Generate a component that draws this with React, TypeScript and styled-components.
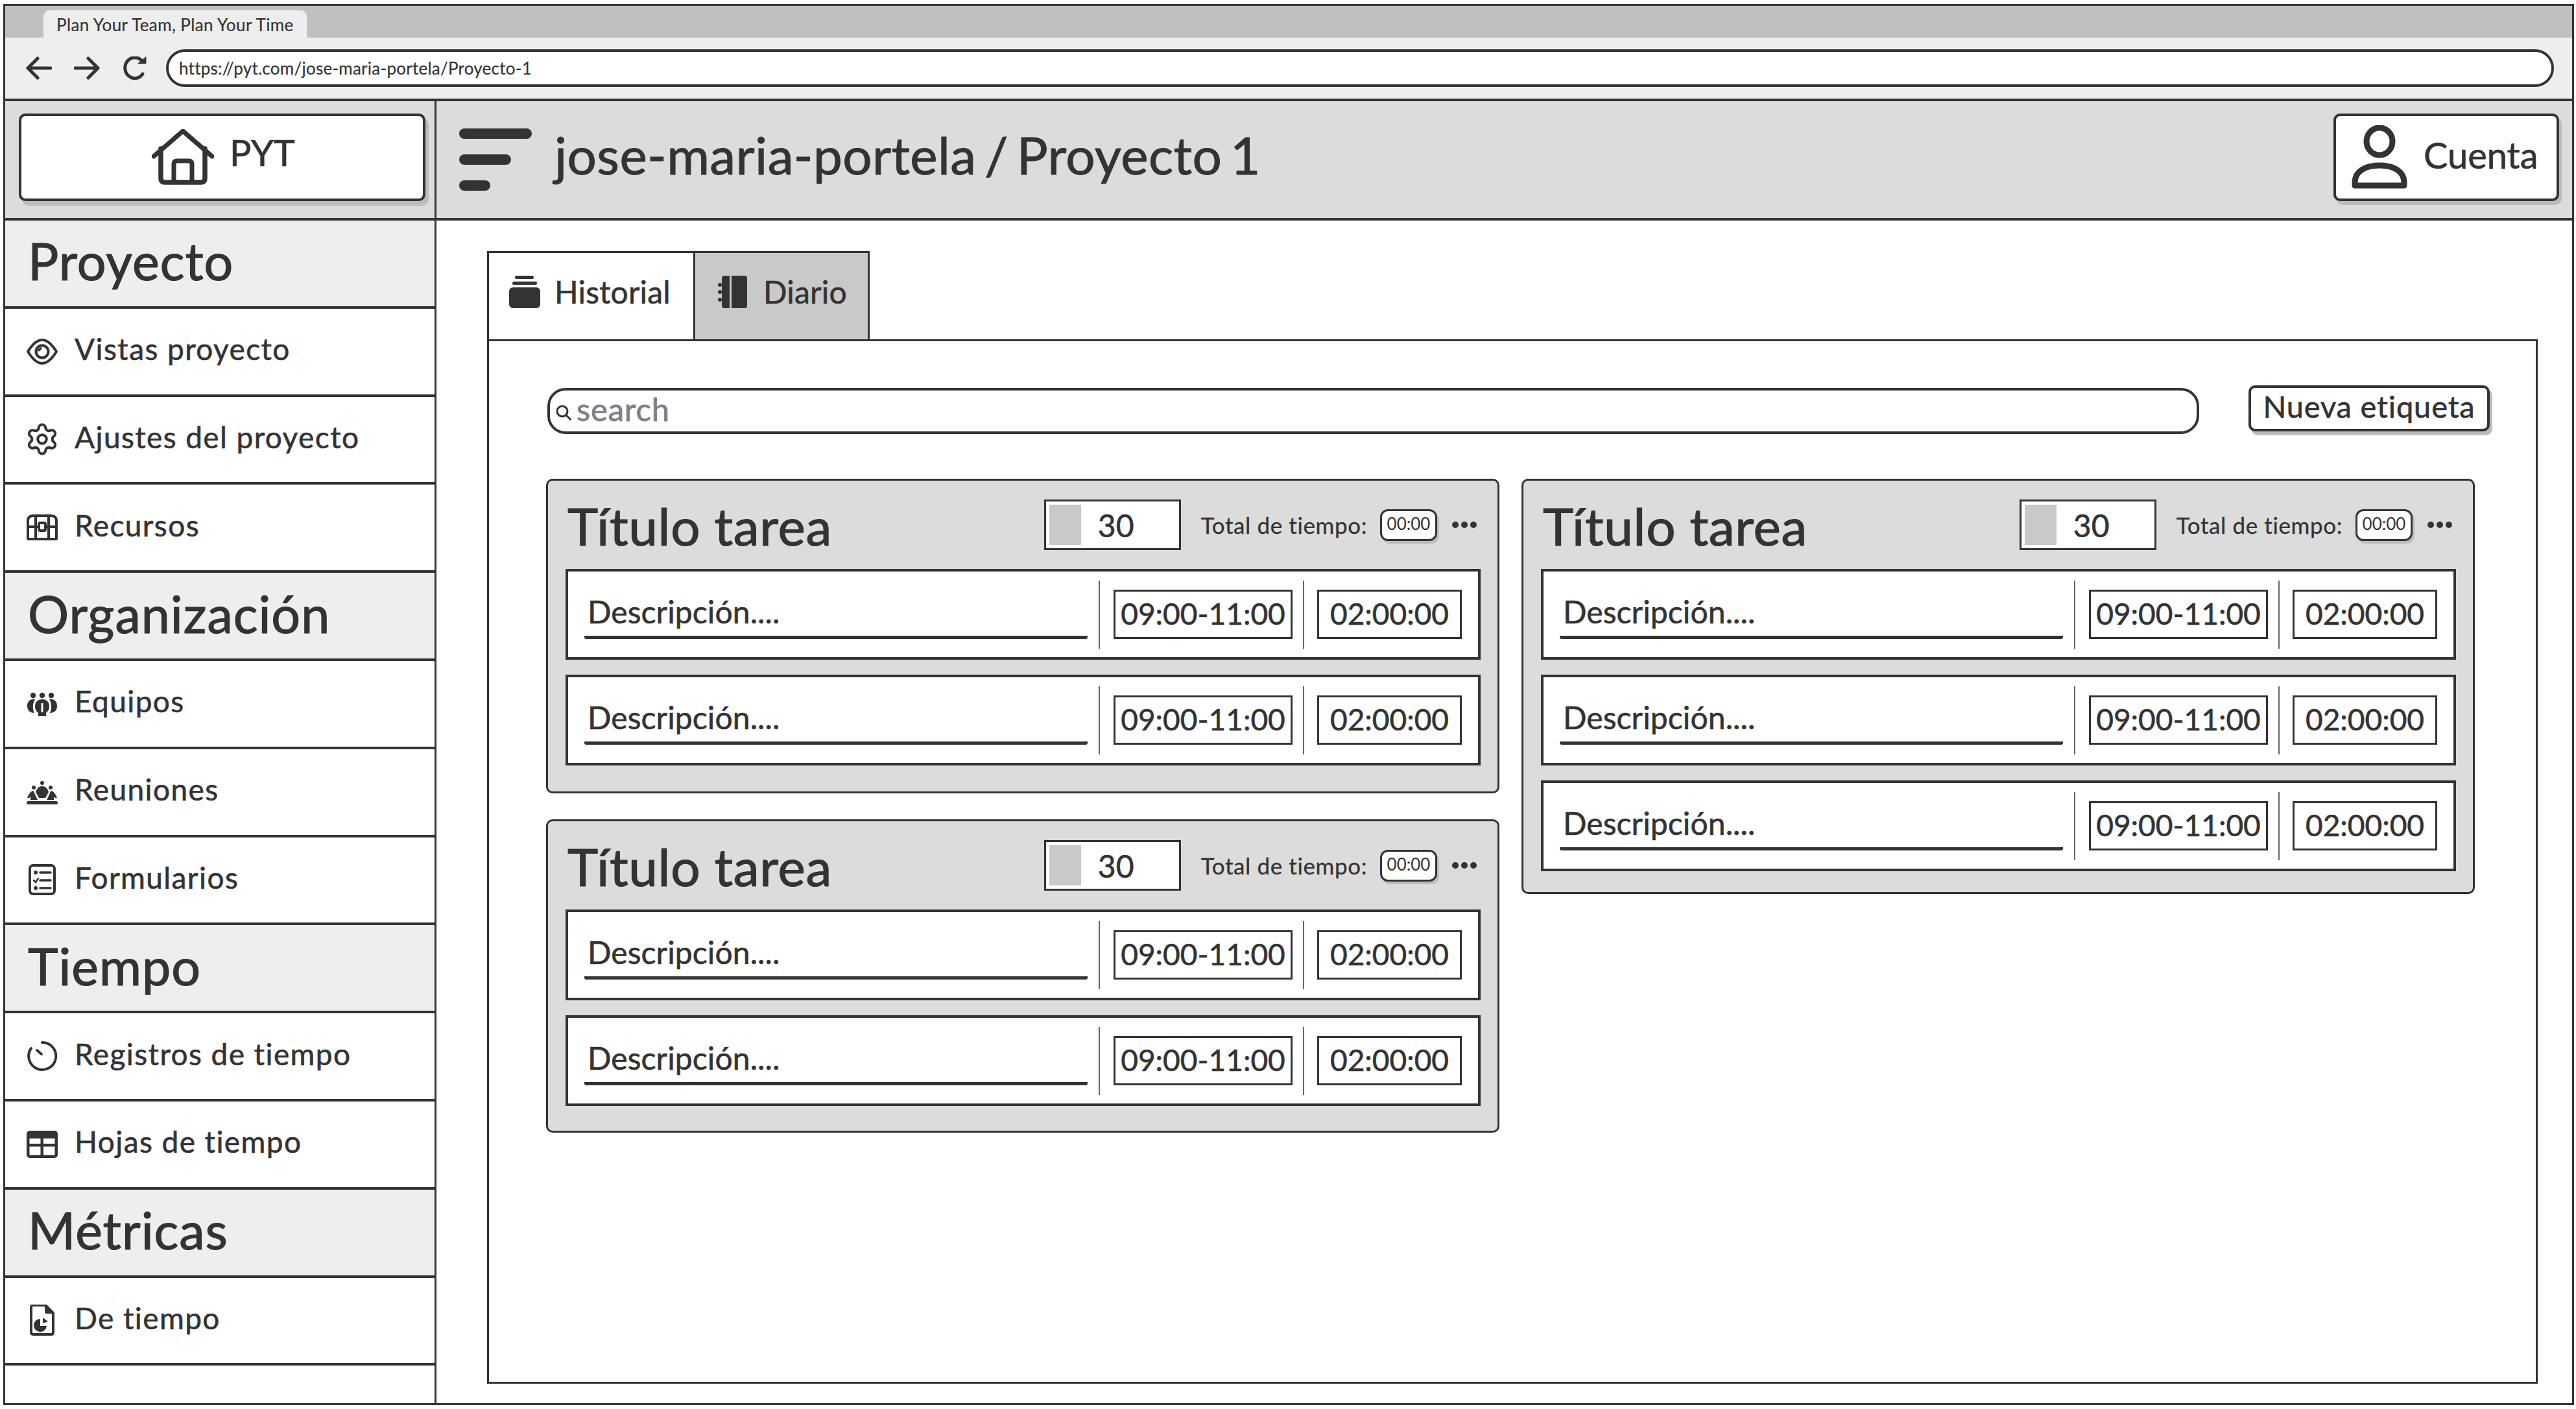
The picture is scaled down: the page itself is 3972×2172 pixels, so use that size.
import React from "react";
import styled, { createGlobalStyle } from "styled-components";
import { Settings } from "lucide-react";

const Global = createGlobalStyle`
  html, body { margin: 0; padding: 0; background: #fff; }
  body { font-family: "Lato", "Open Sans", sans-serif; color: #333; overflow: hidden; -webkit-text-stroke: 0.6px #333; }
  #root { width: 3972px; height: 2172px; }
  * { box-sizing: border-box; }
`;

const INK = "#333";

const Page = styled.div`
  width: 3972px;
  height: 2172px;
  padding: 6px 3px 6px 5px;
  background: #fff;
`;
const Frame = styled.div`
  width: 100%;
  height: 100%;
  border: 3px solid ${INK};
  display: flex;
  flex-direction: column;
`;
const TabStrip = styled.div`
  height: 49px;
  background: #c0c0c0;
  padding-left: 59px;
  display: flex;
  align-items: flex-end;
`;
const BrowserTab = styled.div`
  width: 406px;
  height: 42px;
  background: #eee;
  border-radius: 9px 9px 0 0;
  padding-left: 20px;
  font-size: 26px;
  line-height: 44px;
  letter-spacing: 0.4px;
  -webkit-text-stroke: 0.2px #333;
`;
const BrowserBar = styled.div`
  height: 94px;
  background: #eee;
  display: flex;
  align-items: center;
  padding: 0 28px 0 32px;
`;
const NavIcon = styled.svg`
  width: 40px;
  height: 36px;
  margin-right: 34px;
  flex: none;
`;
const Address = styled.div`
  flex: 1;
  height: 58px;
  margin-left: -6px;
  background: #fff;
  border: 4px solid ${INK};
  border-radius: 29px;
  padding-left: 16px;
  font-size: 26px;
  line-height: 50px;
  letter-spacing: 0.25px;
  -webkit-text-stroke: 0.2px #333;
`;
const Shell = styled.div`
  flex: 1;
  display: grid;
  grid-template-columns: 665px 1fr;
  grid-template-rows: 188px 1fr;
  min-height: 0;
`;
const LogoCell = styled.div`
  background: #dcdcdc;
  border-top: 4px solid ${INK};
  border-bottom: 4px solid ${INK};
  border-right: 3px solid ${INK};
  padding: 0 0 8px 21px;
  display: flex;
  align-items: center;
`;
const LogoButton = styled.div`
  width: 627px;
  height: 135px;
  background: #fff;
  border: 4px solid ${INK};
  border-radius: 10px;
  box-shadow: 5px 7px 0 #bcbcbc;
  display: flex;
  align-items: center;
  justify-content: center;
  gap: 24px;
  padding-left: 4px;
  font-size: 56px;
`;
const LogoText = styled.span`
  margin-top: -16px;
`;
const TopBar = styled.div`
  background: #dcdcdc;
  border-top: 4px solid ${INK};
  border-bottom: 4px solid ${INK};
  display: flex;
  align-items: center;
  padding: 0 20px 0 35px;
`;
const MenuGlyph = styled.svg`
  width: 112px;
  height: 96px;
  flex: none;
`;
const PageTitle = styled.h1`
  margin: -17px 0 0 35px;
  font-size: 80px;
  font-weight: 400;
  letter-spacing: 0.4px;
  word-spacing: -8px;
  -webkit-text-stroke: 1px #333;
  flex: 1;
`;
const AccountButton = styled.div`
  width: 348px;
  height: 135px;
  margin-top: -8px;
  background: #fff;
  border: 4px solid ${INK};
  border-radius: 10px;
  box-shadow: 4px 6px 0 #bcbcbc;
  display: flex;
  align-items: center;
  padding-left: 24px;
  gap: 25px;
  font-size: 56px;
  line-height: 56px;
`;
const AccountText = styled.span`
  margin-top: -6px;
`;
const Sidebar = styled.nav`
  border-right: 3px solid ${INK};
  display: flex;
  flex-direction: column;
`;
const SectionRow = styled.div`
  height: 135.8px;
  flex: none;
  background: #eee;
  border-bottom: 4px solid ${INK};
  padding: 0 0 8px 35px;
  display: flex;
  align-items: center;
  font-size: 79px;
  letter-spacing: 1px;
  -webkit-text-stroke: 1.2px #333;
`;
const ItemRow = styled.div`
  height: 135.8px;
  flex: none;
  border-bottom: 4px solid ${INK};
  padding-left: 33px;
  display: flex;
  align-items: center;
  gap: 26px;
  font-size: 46px;
  letter-spacing: 1.4px;
`;
const ItemLabel = styled.span`
  margin-top: -8px;
`;
const Glyph = styled.svg`
  width: 48px;
  height: 48px;
  flex: none;
  display: block;
`;
const GearWrap = styled.span`
  display: flex;
  align-items: center;
  justify-content: center;
  width: 48px;
  height: 48px;
  flex: none;
`;
const Main = styled.main`
  padding: 47px 0 0 78px;
  display: flex;
  flex-direction: column;
  min-height: 0;
`;
const TabRow = styled.div`
  height: 136px;
  display: flex;
  flex: none;
`;
const TabItem = styled.div<{ $active?: boolean }>`
  width: ${(p) => (p.$active ? 321 : 269)}px;
  background: ${(p) => (p.$active ? "#fff" : "#c9c9c9")};
  border: 3px solid ${INK};
  border-left: ${(p) => (p.$active ? `3px solid ${INK}` : "none")};
  border-bottom: none;
  display: flex;
  align-items: center;
  gap: 22px;
  padding: 0 0 14px ${(p) => (p.$active ? 31 : 35)}px;
  font-size: 48px;
  letter-spacing: 0.2px;
`;
const TabGlyph = styled.svg`
  width: 48px;
  height: 50px;
  flex: none;
`;
const Panel = styled.section`
  width: 3162px;
  height: 1610px;
  border: 3px solid ${INK};
  padding: 72px 0 0 88px;
  flex: none;
`;
const SearchRow = styled.div`
  display: flex;
  align-items: flex-start;
  margin-bottom: 69px;
  height: 71px;
`;
const SearchBox = styled.div`
  width: 2547px;
  height: 71px;
  margin-left: 2px;
  border: 4px solid ${INK};
  border-radius: 28px;
  display: flex;
  align-items: center;
  gap: 8px;
  padding: 0 0 8px 9px;
  font-size: 49px;
  color: #7f7f8b;
  letter-spacing: 0.8px;
  -webkit-text-stroke: 0.8px #7f7f8b;
`;
const SearchGlyph = styled.svg`
  width: 24px;
  height: 24px;
  flex: none;
  margin-top: 12px;
`;
const ActionButton = styled.div`
  width: 372px;
  height: 71px;
  margin: -4px 0 0 76px;
  background: #fff;
  border: 4px solid ${INK};
  border-radius: 10px;
  box-shadow: 4px 6px 0 #bcbcbc;
  display: flex;
  align-items: center;
  justify-content: center;
  padding-bottom: 7px;
  font-size: 47px;
  letter-spacing: 0.85px;
`;
const Board = styled.div`
  display: grid;
  grid-template-columns: 1470px 1470px;
  column-gap: 34px;
  align-items: start;
`;
const Column = styled.div`
  display: flex;
  flex-direction: column;
  gap: 40px;
`;
const Card = styled.article<{ $bottom: number }>`
  background: #dcdcdc;
  border: 3px solid ${INK};
  border-radius: 10px;
  padding: 0 26px ${(p) => p.$bottom}px 27px;
`;
const CardHead = styled.header`
  height: 136px;
  display: flex;
  align-items: center;
  padding-right: 5px;
`;
const CardTitle = styled.h2`
  margin: 2px 0 0 3px;
  font-size: 80px;
  font-weight: 400;
  letter-spacing: 0.7px;
  -webkit-text-stroke: 1.2px #333;
  flex: 1;
`;
const Stepper = styled.div`
  width: 211px;
  height: 78px;
  background: #fff;
  border: 3px solid ${INK};
  padding: 5px;
  display: flex;
  align-items: center;
  gap: 26px;
  font-size: 48px;
`;
const StepperSwatch = styled.span`
  width: 49px;
  height: 100%;
  background: #c9c9c9;
  flex: none;
`;
const TotalLabel = styled.span`
  margin-left: 31px;
  font-size: 35px;
  letter-spacing: 0.6px;
  -webkit-text-stroke: 0.3px #333;
`;
const TotalPill = styled.span`
  width: 88px;
  height: 49px;
  margin-left: 20px;
  background: #fff;
  border: 3px solid ${INK};
  border-radius: 12px;
  box-shadow: 3px 4px 0 #bcbcbc;
  display: flex;
  align-items: center;
  justify-content: center;
  font-size: 26px;
  padding-bottom: 5px;
  -webkit-text-stroke: 0;
`;
const Dots = styled.svg`
  width: 40px;
  height: 12px;
  margin-left: 22px;
  flex: none;
`;
const Rows = styled.div`
  display: flex;
  flex-direction: column;
  gap: 23px;
`;
const Row = styled.div`
  height: 140px;
  background: #fff;
  border: 4px solid ${INK};
  display: flex;
  align-items: center;
  padding: 0 25px;
`;
const Description = styled.div`
  width: 776px;
  height: 75px;
  flex: none;
  border-bottom: 5px solid ${INK};
  border-radius: 0 0 3px 3px;
  padding-left: 5px;
  font-size: 48px;
  line-height: 66px;
  letter-spacing: 0.1px;
  white-space: nowrap;
`;
const RowDivider = styled.span<{ $left: number; $right: number }>`
  width: 2px;
  height: 105px;
  background: #666;
  flex: none;
  margin: 0 ${(p) => p.$right}px 0 ${(p) => p.$left}px;
`;
const TimeBox = styled.div<{ $width: number }>`
  width: ${(p) => p.$width}px;
  height: 76px;
  flex: none;
  border: 3px solid ${INK};
  display: flex;
  align-items: center;
  justify-content: center;
  padding-bottom: 4px;
  font-size: 46px;
  white-space: nowrap;
`;

const HomeIcon = () => (
  <svg width="96" height="86" viewBox="0 0 96 86" fill="none" stroke={INK} strokeWidth="7" strokeLinecap="round" strokeLinejoin="round">
    <path d="M3 42 L48 3 L93 42" />
    <path d="M14 30 V76 Q14 82 20 82 H76 Q82 82 82 76 V30" strokeWidth="7.5" />
    <path d="M34 82 V54 Q34 49 39 49 H57 Q62 49 62 54 V82" />
  </svg>
);
const UserIcon = () => (
  <svg width="86" height="98" viewBox="0 0 86 98" fill="none" stroke={INK} strokeWidth="9" strokeLinejoin="round">
    <ellipse cx="43" cy="25" rx="20" ry="21" />
    <path d="M5 93 V88 C5 72 20 62 43 62 C66 62 81 72 81 88 V93 Z" />
  </svg>
);
const s = { fill: "none", stroke: INK, strokeWidth: 4, strokeLinecap: "round" as const, strokeLinejoin: "round" as const };

const EyeIcon = () => (
  <Glyph viewBox="0 0 48 48">
    <g {...s}>
      <path d="M2 24 C10 11 17 6 24 6 C31 6 38 11 46 24 C38 37 31 42 24 42 C17 42 10 37 2 24Z" />
      <circle cx="24" cy="24" r="9.5" />
    </g>
    <path d="M24 17 A7 7 0 0 0 17 24 Q23 23 24 17Z" fill={INK} />
  </Glyph>
);
const GearIcon = () => (
  <GearWrap>
    <Settings size={54} strokeWidth={1.8} color={INK} style={{ flex: "none" }} />
  </GearWrap>
);
const ChestIcon = () => (
  <Glyph viewBox="0 0 48 48">
    <g {...s}>
      <path d="M2 41 V14 Q2 6 10 6 H38 Q46 6 46 14 V41 Q46 42 45 42 H3 Q2 42 2 41Z" />
      <path d="M2 23 H18 M30 23 H46 M14 6 V42 M34 6 V42" />
      <rect x="19" y="17" width="10" height="12" rx="2" />
    </g>
  </Glyph>
);
const TeamIcon = () => (
  <Glyph viewBox="0 0 48 48" fill={INK}>
    <circle cx="10" cy="11" r="4.2" />
    <circle cx="24" cy="11" r="4.2" />
    <circle cx="38" cy="11" r="4.2" />
    <path d="M13 17 C6 16 1 20 1 27 C1 34 5 38 12 38 C9 32 9 23 13 17Z" />
    <path d="M35 17 C42 16 47 20 47 27 C47 34 43 38 36 38 C39 32 39 23 35 17Z" />
    <path d="M24 17 C17 17 13 21 13 28 C13 34 16 36 18 38 V43 H30 V38 C32 36 35 34 35 28 C35 21 31 17 24 17Z" />
    <path d="M22.5 23 H25.5 V37 H22.5Z" fill="#fff" />
  </Glyph>
);
const MeetingIcon = () => (
  <Glyph viewBox="0 0 48 48" fill={INK}>
    <circle cx="24" cy="10" r="3" />
    <circle cx="11" cy="17" r="3" />
    <circle cx="37" cy="17" r="3" />
    <path d="M24 15 C18 15 15 20 14 24 L19 33 H29 L34 24 C33 20 30 15 24 15Z" />
    <path d="M10 22 C6 23 3 28 1 33 H4 L6 31 V36 H17 L14.5 31 L11 23Z" />
    <path d="M38 22 C42 23 45 28 47 33 H44 L42 31 V36 H31 L33.5 31 L37 23Z" />
    <rect x="0" y="38" width="48" height="5" rx="2.5" />
  </Glyph>
);
const FormIcon = () => (
  <Glyph viewBox="0 0 48 48">
    <g {...s}>
      <rect x="5" y="2" width="38" height="44" rx="5" />
      <path d="M21 13 H37 M21 25 H37 M21 37 H37" strokeWidth="3.5" />
      <path d="M11 25 L14 28 L18 22" strokeWidth="2.5" />
    </g>
    <circle cx="14" cy="13" r="3" fill={INK} />
    <circle cx="14" cy="37" r="3" fill={INK} />
  </Glyph>
);
const TimerIcon = () => (
  <Glyph viewBox="0 0 48 48">
    <g {...s}>
      <path d="M24 3 A21 21 0 1 1 7 12" />
      <path d="M16 15 L23 21" />
    </g>
  </Glyph>
);
const TableIcon = () => (
  <Glyph viewBox="0 0 48 48">
    <rect x="0" y="3" width="48" height="42" rx="5" fill={INK} />
    <path d="M4.5 15 H21.5 V23 H4.5Z M26 15 H43.5 V23 H26Z M4.5 27.5 H21.5 V40.5 H4.5Z M26 27.5 H43.5 V40.5 H26Z" fill="#fff" />
  </Glyph>
);
const FileIcon = () => (
  <Glyph viewBox="0 0 48 48">
    <g {...s}>
      <path d="M11 1 H29 L41 13 V43 Q41 46 38 46 H11 Q7 46 7 43 V4 Q7 1 11 1Z" />
    </g>
    <path d="M28 1 L41 14 H31 Q28 14 28 11Z" fill={INK} />
    <path d="M21 22 A10 10 0 1 0 31 33 H21Z" fill={INK} />
    <path d="M25 20 L33 26 L25 29Z" fill={INK} />
  </Glyph>
);

const nav: { kind: "section" | "item"; label: string; icon?: React.ReactNode }[] = [
  { kind: "section", label: "Proyecto" },
  { kind: "item", label: "Vistas proyecto", icon: <EyeIcon /> },
  { kind: "item", label: "Ajustes del proyecto", icon: <GearIcon /> },
  { kind: "item", label: "Recursos", icon: <ChestIcon /> },
  { kind: "section", label: "Organización" },
  { kind: "item", label: "Equipos", icon: <TeamIcon /> },
  { kind: "item", label: "Reuniones", icon: <MeetingIcon /> },
  { kind: "item", label: "Formularios", icon: <FormIcon /> },
  { kind: "section", label: "Tiempo" },
  { kind: "item", label: "Registros de tiempo", icon: <TimerIcon /> },
  { kind: "item", label: "Hojas de tiempo", icon: <TableIcon /> },
  { kind: "section", label: "Métricas" },
  { kind: "item", label: "De tiempo", icon: <FileIcon /> },
];

const TaskCard = ({ rows, bottom }: { rows: number; bottom: number }) => (
  <Card $bottom={bottom}>
    <CardHead>
      <CardTitle>Título tarea</CardTitle>
      <Stepper>
        <StepperSwatch />
        30
      </Stepper>
      <TotalLabel>Total de tiempo:</TotalLabel>
      <TotalPill>00:00</TotalPill>
      <Dots viewBox="0 0 40 12">
        <circle cx="6" cy="6" r="5" fill={INK} />
        <circle cx="20" cy="6" r="5" fill={INK} />
        <circle cx="34" cy="6" r="5" fill={INK} />
      </Dots>
    </CardHead>
    <Rows>
      {Array.from({ length: rows }, (_, i) => (
        <Row key={i}>
          <Description>Descripción....</Description>
          <RowDivider $left={17} $right={21} />
          <TimeBox $width={276}>09:00-11:00</TimeBox>
          <RowDivider $left={16} $right={20} />
          <TimeBox $width={223}>02:00:00</TimeBox>
        </Row>
      ))}
    </Rows>
  </Card>
);

export default function App() {
  return (
    <Page>
      <Global />
      <Frame>
        <TabStrip>
          <BrowserTab>Plan Your Team, Plan Your Time</BrowserTab>
        </TabStrip>
        <BrowserBar>
          <NavIcon viewBox="0 0 40 36" fill="none" stroke={INK} strokeWidth="5" strokeLinecap="round" strokeLinejoin="round">
            <path d="M38 18 H3 M18 3 L3 18 L18 33" />
          </NavIcon>
          <NavIcon viewBox="0 0 40 36" fill="none" stroke={INK} strokeWidth="5" strokeLinecap="round" strokeLinejoin="round">
            <path d="M2 18 H37 M22 3 L37 18 L22 33" />
          </NavIcon>
          <NavIcon viewBox="0 0 40 36" fill="none" stroke={INK} strokeWidth="5" strokeLinecap="round">
            <path d="M31 7 A15 16 0 1 0 32 27" />
            <path d="M25 11 L37 11 L37 1Z" fill={INK} strokeWidth="1" />
          </NavIcon>
          <Address>https://pyt.com/jose-maria-portela/Proyecto-1</Address>
        </BrowserBar>
        <Shell>
          <LogoCell>
            <LogoButton>
              <HomeIcon />
              <LogoText>PYT</LogoText>
            </LogoButton>
          </LogoCell>
          <TopBar>
            <MenuGlyph viewBox="0 0 112 96" fill={INK}>
              <rect x="0" y="0" width="112" height="16" rx="8" />
              <rect x="0" y="40" width="80" height="16" rx="8" />
              <rect x="0" y="80" width="48" height="16" rx="8" />
            </MenuGlyph>
            <PageTitle>jose-maria-portela / Proyecto 1</PageTitle>
            <AccountButton>
              <UserIcon />
              <AccountText>Cuenta</AccountText>
            </AccountButton>
          </TopBar>
          <Sidebar>
            {nav.map((n) =>
              n.kind === "section" ? (
                <SectionRow key={n.label}>{n.label}</SectionRow>
              ) : (
                <ItemRow key={n.label}>
                  {n.icon}
                  <ItemLabel>{n.label}</ItemLabel>
                </ItemRow>
              )
            )}
          </Sidebar>
          <Main>
            <TabRow>
              <TabItem $active>
                <TabGlyph viewBox="0 0 48 50" fill={INK}>
                  <rect x="9" y="0" width="29" height="5" rx="2.5" />
                  <rect x="5" y="9" width="38" height="5" rx="2.5" />
                  <rect x="0" y="18" width="48" height="32" rx="6" />
                </TabGlyph>
                Historial
              </TabItem>
              <TabItem>
                <TabGlyph viewBox="0 0 48 50" fill={INK}>
                  <path d="M10 0 H18 V50 H10 Q6 50 6 46 V4 Q6 0 10 0Z" />
                  <path d="M21 0 H41 Q45 0 45 4 V46 Q45 50 41 50 H21Z" />
                  <circle cx="3" cy="14" r="3" />
                  <circle cx="3" cy="25" r="3" />
                  <circle cx="3" cy="37" r="3" />
                </TabGlyph>
                Diario
              </TabItem>
            </TabRow>
            <Panel>
              <SearchRow>
                <SearchBox>
                  <SearchGlyph viewBox="0 0 24 24" fill="none" stroke={INK} strokeWidth="3" strokeLinecap="round">
                    <circle cx="10" cy="10" r="8" />
                    <path d="M16 16 L23 23" />
                  </SearchGlyph>
                  search
                </SearchBox>
                <ActionButton>Nueva etiqueta</ActionButton>
              </SearchRow>
              <Board>
                <Column>
                  <TaskCard rows={2} bottom={40} />
                  <TaskCard rows={2} bottom={38} />
                </Column>
                <Column>
                  <TaskCard rows={3} bottom={32} />
                </Column>
              </Board>
            </Panel>
          </Main>
        </Shell>
      </Frame>
    </Page>
  );
}
